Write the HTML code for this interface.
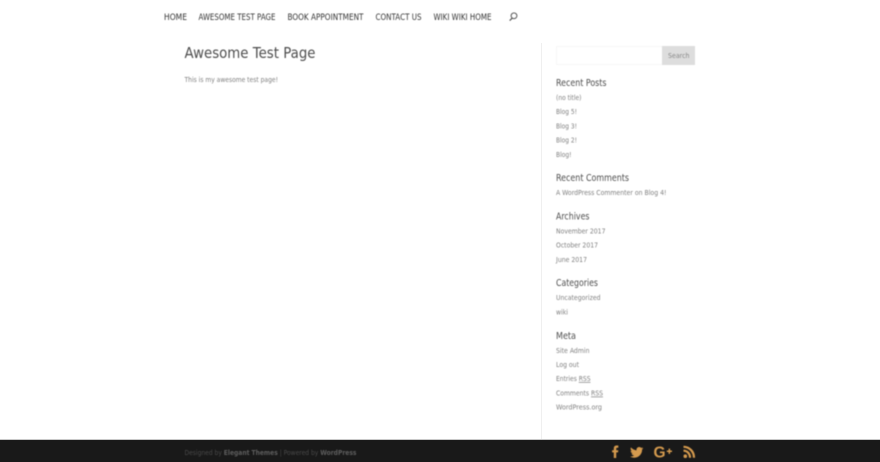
<!DOCTYPE html>
<html><head><meta charset="utf-8"><title>Awesome Test Page</title>
<style>
html,body{margin:0;padding:0;background:#fff}
body{width:880px;height:462px;overflow:hidden;position:relative}
svg{display:block;position:absolute;left:0;top:0}
text{font-family:"DejaVu Sans","Liberation Sans",sans-serif}
.soft{filter:blur(.4px)}
.n{font-size:8.400px;fill:#333}
.h{font-size:9.300px;fill:#4d4d4d}
.i{font-size:7px;fill:#808080}
</style></head>
<body>
<svg width="880" height="462" viewBox="0 0 880 462" xmlns="http://www.w3.org/2000/svg">
<rect x="541" y="43" width="1" height="396" fill="#efefef"/>
<g class="soft">
<g class="n">
<text x="164" y="20" textLength="23" lengthAdjust="spacingAndGlyphs">HOME</text>
<text x="198.500" y="20" textLength="77" lengthAdjust="spacingAndGlyphs">AWESOME TEST PAGE</text>
<text x="287.500" y="20" textLength="76" lengthAdjust="spacingAndGlyphs">BOOK APPOINTMENT</text>
<text x="375.500" y="20" textLength="46" lengthAdjust="spacingAndGlyphs">CONTACT US</text>
<text x="433.500" y="20" textLength="58" lengthAdjust="spacingAndGlyphs">WIKI WIKI HOME</text>
</g>
<circle cx="514" cy="15.800" r="2.900" fill="none" stroke="#444" stroke-width=".9"/>
<path d="M512 18.200L509.700 20.600" stroke="#444" stroke-width="1.100" fill="none"/>

<text x="184.500" y="58" font-size="15" fill="#4d4d4d" textLength="131" lengthAdjust="spacingAndGlyphs">Awesome Test Page</text>
<text x="184.500" y="82" class="i" textLength="93.500" lengthAdjust="spacingAndGlyphs">This is my awesome test page!</text>

<rect x="556.500" y="46.500" width="106" height="18" fill="#fff" stroke="#eee" stroke-dasharray="1 1"/>
<rect x="662" y="46" width="33" height="19" fill="#ddd"/>
<text x="668" y="58" font-size="7" fill="#888" textLength="21.500" lengthAdjust="spacingAndGlyphs">Search</text>

<text x="556" y="86" class="h" textLength="50.500" lengthAdjust="spacingAndGlyphs">Recent Posts</text>
<text x="556" y="100" class="i" textLength="25.500" lengthAdjust="spacingAndGlyphs">(no title)</text>
<text x="556" y="114" class="i" textLength="21" lengthAdjust="spacingAndGlyphs">Blog 5!</text>
<text x="556" y="128.500" class="i" textLength="21" lengthAdjust="spacingAndGlyphs">Blog 3!</text>
<text x="556" y="142.500" class="i" textLength="21" lengthAdjust="spacingAndGlyphs">Blog 2!</text>
<text x="556" y="157" class="i" textLength="15.500" lengthAdjust="spacingAndGlyphs">Blog!</text>

<text x="556" y="181" class="h" textLength="73" lengthAdjust="spacingAndGlyphs">Recent Comments</text>
<text x="556" y="195" class="i" textLength="110.500" lengthAdjust="spacingAndGlyphs">A WordPress Commenter on Blog 4!</text>

<text x="556" y="219.500" class="h" textLength="33.500" lengthAdjust="spacingAndGlyphs">Archives</text>
<text x="556" y="233.500" class="i" textLength="49.500" lengthAdjust="spacingAndGlyphs">November 2017</text>
<text x="556" y="247.500" class="i" textLength="42" lengthAdjust="spacingAndGlyphs">October 2017</text>
<text x="556" y="262" class="i" textLength="31" lengthAdjust="spacingAndGlyphs">June 2017</text>

<text x="556" y="286" class="h" textLength="42" lengthAdjust="spacingAndGlyphs">Categories</text>
<text x="556" y="300" class="i" textLength="44.500" lengthAdjust="spacingAndGlyphs">Uncategorized</text>
<text x="556" y="314.500" class="i" textLength="12" lengthAdjust="spacingAndGlyphs">wiki</text>

<text x="556" y="339" class="h" textLength="20" lengthAdjust="spacingAndGlyphs">Meta</text>
<text x="556" y="353" class="i" textLength="33.500" lengthAdjust="spacingAndGlyphs">Site Admin</text>
<text x="556" y="367" class="i" textLength="23" lengthAdjust="spacingAndGlyphs">Log out</text>
<text x="556" y="381" class="i" textLength="34.500" lengthAdjust="spacingAndGlyphs">Entries <tspan text-decoration="underline">RSS</tspan></text>
<text x="556" y="395.500" class="i" textLength="47" lengthAdjust="spacingAndGlyphs">Comments <tspan text-decoration="underline">RSS</tspan></text>
<text x="556" y="409.500" class="i" textLength="46" lengthAdjust="spacingAndGlyphs">WordPress.org</text>
</g>

<rect x="0" y="439" width="880" height="1" fill="#c9c9c9"/>
<rect x="0" y="440" width="880" height="22" fill="#191919"/>
<g class="soft">
<text x="184.500" y="455" font-size="7" fill="#4a4a4a" textLength="172" lengthAdjust="spacingAndGlyphs">Designed by <tspan font-weight="bold" fill="#5e5e5e">Elegant Themes</tspan> | Powered by <tspan font-weight="bold" fill="#5e5e5e">WordPress</tspan></text>
<g fill="#d49a4e">
<path d="M613.800 458v-5.600h-1.700v-2.200h1.700v-1.700c0-2 1.100-3 2.800-3h1.700v2.300h-1.100c-.8 0-1 .4-1 1.100v1.300h2.100l-.3 2.200h-1.800V458z"/>
<path d="M643.200 448.300c-.5.200-1 .4-1.500.4.500-.3 1-.8 1.200-1.400-.5.300-1.100.5-1.700.6-.5-.5-1.200-.9-2-.9-1.500 0-2.700 1.200-2.700 2.700 0 .2 0 .4.100.6-2.300-.1-4.300-1.200-5.600-2.900-.2.400-.4.900-.4 1.400 0 .9.500 1.800 1.200 2.300-.4 0-.9-.1-1.200-.3v0c0 1.300.9 2.400 2.200 2.700-.5.100-1 .1-1.300 0 .3 1.100 1.400 1.900 2.600 1.900-1 .8-2.600 1.300-4 1.100 1.200.8 2.600 1.200 4.200 1.200 5 0 7.800-4.200 7.800-7.800v-.4c.6-.4 1.100-.9 1.400-1.500z"/>
<text x="653.500" y="457.500" font-size="15.500" font-weight="bold" style="font-family:'Liberation Sans',sans-serif" fill="#d49a4e">G</text>
<path d="M666.800 450.500h1.800v-1.900h1.500v1.900h1.900v1.500h-1.900v1.900h-1.500V452h-1.800z"/>
<circle cx="685.300" cy="456.200" r="1.800"/>
</g>
<g fill="none" stroke="#d49a4e" stroke-width="2.200">
<path d="M683.500 450.700c3.600 0 6.500 2.900 6.500 7"/>
<path d="M683.500 446.800c5.900 0 10.500 4.700 10.500 10.900"/>
</g>
</g>
</svg>
</body></html>
